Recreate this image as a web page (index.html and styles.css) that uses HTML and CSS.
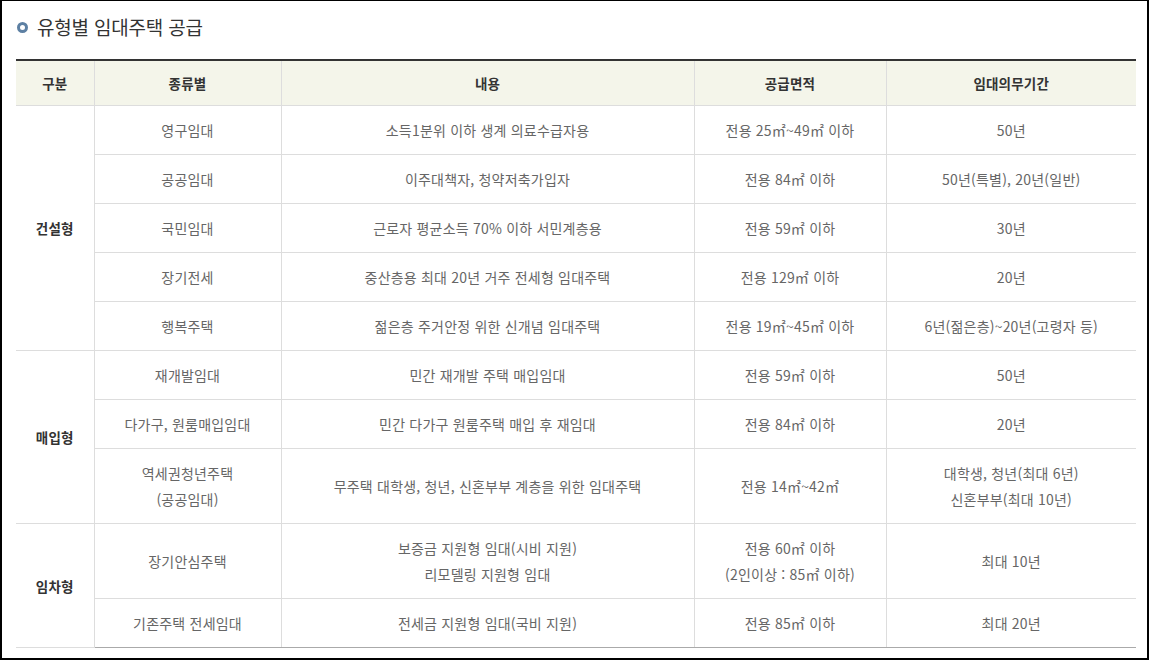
FILE: index.html
```html
<!DOCTYPE html>
<html lang="ko">
<head>
<meta charset="utf-8">
<title>유형별 임대주택 공급</title>
<link rel="stylesheet" href="styles.css">
</head>
<body>
<div class="frame">
  <h2 class="title"><span class="dot"></span>유형별 임대주택 공급</h2>
  <table class="supply">
    <colgroup>
      <col class="c1"><col class="c2"><col class="c3"><col class="c4"><col class="c5">
    </colgroup>
    <thead>
      <tr><th>구분</th><th>종류별</th><th>내용</th><th>공급면적</th><th>임대의무기간</th></tr>
    </thead>
    <tbody>
      <tr><td class="grp" rowspan="5">건설형</td><td>영구임대</td><td>소득1분위 이하 생계 의료수급자용</td><td>전용 25㎡~49㎡ 이하</td><td>50년</td></tr>
      <tr><td>공공임대</td><td>이주대책자, 청약저축가입자</td><td>전용 84㎡ 이하</td><td>50년(특별), 20년(일반)</td></tr>
      <tr><td>국민임대</td><td>근로자 평균소득 70% 이하 서민계층용</td><td>전용 59㎡ 이하</td><td>30년</td></tr>
      <tr><td>장기전세</td><td>중산층용 최대 20년 거주 전세형 임대주택</td><td>전용 129㎡ 이하</td><td>20년</td></tr>
      <tr><td>행복주택</td><td>젊은층 주거안정 위한 신개념 임대주택</td><td>전용 19㎡~45㎡ 이하</td><td>6년(젊은층)~20년(고령자 등)</td></tr>
      <tr><td class="grp" rowspan="3">매입형</td><td>재개발임대</td><td>민간 재개발 주택 매입임대</td><td>전용 59㎡ 이하</td><td>50년</td></tr>
      <tr><td>다가구, 원룸매입임대</td><td>민간 다가구 원룸주택 매입 후 재임대</td><td>전용 84㎡ 이하</td><td>20년</td></tr>
      <tr><td>역세권청년주택<br>(공공임대)</td><td>무주택 대학생, 청년, 신혼부부 계층을 위한 임대주택</td><td>전용 14㎡~42㎡</td><td>대학생, 청년(최대 6년)<br>신혼부부(최대 10년)</td></tr>
      <tr><td class="grp" rowspan="2">임차형</td><td>장기안심주택</td><td>보증금 지원형 임대(시비 지원)<br>리모델링 지원형 임대</td><td>전용 60㎡ 이하<br>(2인이상 : 85㎡ 이하)</td><td>최대 10년</td></tr>
      <tr><td>기존주택 전세임대</td><td>전세금 지원형 임대(국비 지원)</td><td>전용 85㎡ 이하</td><td>최대 20년</td></tr>
    </tbody>
  </table>
</div>
</body>
</html>
```
FILE: styles.css
```css
* { box-sizing: border-box; }
html, body { margin: 0; padding: 0; background: #fff; }
body {
  font-family: "Noto Sans CJK KR", "Noto Sans", sans-serif;
  color: #666;
}
.frame {
  width: 1149px;
  height: 660px;
  border-style: solid;
  border-color: #000;
  border-width: 1px 2px 2px 2px;
  padding: 0 11px 0 14px;
}
.title {
  display: flex;
  align-items: center;
  margin: 0 0 20px 0;
  padding-top: 14px;
  height: 38px;
  font-size: 19px;
  line-height: 24px;
  font-weight: normal;
  color: #333;
  letter-spacing: -0.2px;
}
.dot {
  width: 11px;
  height: 11px;
  border-radius: 50%;
  border: 3px solid #5d80a3;
  margin: 1px 9px 0 1px;
  flex: none;
}
.supply {
  width: 1120px;
  border-collapse: collapse;
  table-layout: fixed;
  border-top: 2px solid #333;
  border-bottom: 1px solid #aaa;
  font-size: 14px;
  letter-spacing: 0.2px;
}
.c1 { width: 78px; }
.c2 { width: 187px; }
.c3 { width: 413px; }
.c4 { width: 192px; }
.c5 { width: 250px; }
.supply th, .supply td {
  border: 1px solid #ddd;
  text-align: center;
  vertical-align: middle;
  line-height: 26px;
}
.supply tr > :first-child { border-left: none; }
.supply tr > :last-child { border-right: none; }
.supply th {
  background: #f4f5ea;
  color: #333;
  font-weight: bold;
  font-size: 13.5px;
  padding: 9px 6px;
}
.supply td {
  padding: 11px 6px;
}
.supply td.grp {
  color: #333;
  font-weight: bold;
  font-size: 13.5px;
  border-left: none;
}
.supply tbody tr:last-child td { border-bottom: 1px solid #aaa; }
```
